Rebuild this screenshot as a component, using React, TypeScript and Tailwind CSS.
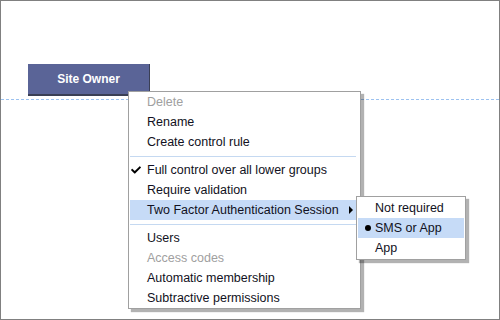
import { FaCheck } from "react-icons/fa";

type Item = {
  label: string;
  disabled?: boolean;
  checked?: boolean;
  active?: boolean;
  submenu?: boolean;
};

const groups: Item[][] = [
  [{ label: "Delete", disabled: true }, { label: "Rename" }, { label: "Create control rule" }],
  [
    { label: "Full control over all lower groups", checked: true },
    { label: "Require validation" },
    { label: "Two Factor Authentication Session", active: true, submenu: true },
  ],
  [
    { label: "Users" },
    { label: "Access codes", disabled: true },
    { label: "Automatic membership" },
    { label: "Subtractive permissions" },
  ],
];

const subItems = [
  { label: "Not required" },
  { label: "SMS or App", selected: true },
  { label: "App" },
];

const MenuRow = ({ item }: { item: Item }) => (
  <div
    className={`relative flex items-center h-5 ml-[1px] mr-[4px] pl-[17px] ${
      item.active ? "bg-[#c6dbf7]" : ""
    } ${item.disabled ? "text-[#a0a0a0]" : "text-[#111122]"}`}
  >
    {item.checked && (
      <FaCheck className="absolute left-[1px] top-[5px] text-[10px] text-black" />
    )}
    <span>{item.label}</span>
    {item.submenu && (
      <span className="absolute right-[3px] top-[6px] w-0 h-0 border-y-[4px] border-y-transparent border-l-[4px] border-l-black" />
    )}
  </div>
);

const Separator = () => (
  <div className="h-2 flex items-center ml-[1px] mr-[4px]">
    <div className="w-full h-px bg-[#c5d9f1]" />
  </div>
);

const App = () => {
  return (
    <div
      className="relative w-[500px] h-[320px] bg-white border border-[#808080] overflow-hidden text-[12.5px]"
      style={{ fontFamily: '"Liberation Sans", Arial, sans-serif' }}
    >
      <div className="pt-[63px] pl-[27px]">
        <div className="w-[122px] h-[32px] flex items-center justify-center bg-[#5a6497] text-white text-[12px] font-bold border-b-2 border-r border-[#3a3f55]">
          Site Owner
        </div>
      </div>
      <div className="mt-[3px] border-t border-dashed border-[#9cc2f0]" />

      {/* context menu */}
      <div className="absolute left-[127px] top-[90px] w-[233px] bg-white border border-[#a0a0a0] shadow-[3px_3px_1px_rgba(0,0,0,0.3)]">
        {groups.map((group, gi) => (
          <div key={gi}>
            {gi > 0 && <Separator />}
            {group.map((item) => (
              <MenuRow key={item.label} item={item} />
            ))}
          </div>
        ))}
      </div>

      {/* submenu */}
      <div className="absolute left-[355px] top-[195px] w-[110px] bg-white border border-[#a0a0a0] shadow-[3px_3px_1px_rgba(0,0,0,0.3)] py-px">
        {subItems.map((s) => (
          <div
            key={s.label}
            className={`relative flex items-center h-5 mx-[1px] pl-[17px] text-[#111122] ${
              s.selected ? "bg-[#c6dbf7]" : ""
            }`}
          >
            {s.selected && (
              <span className="absolute left-[7px] top-[7px] w-[6px] h-[6px] rounded-full bg-black" />
            )}
            {s.label}
          </div>
        ))}
      </div>
    </div>
  );
};

export default App;
